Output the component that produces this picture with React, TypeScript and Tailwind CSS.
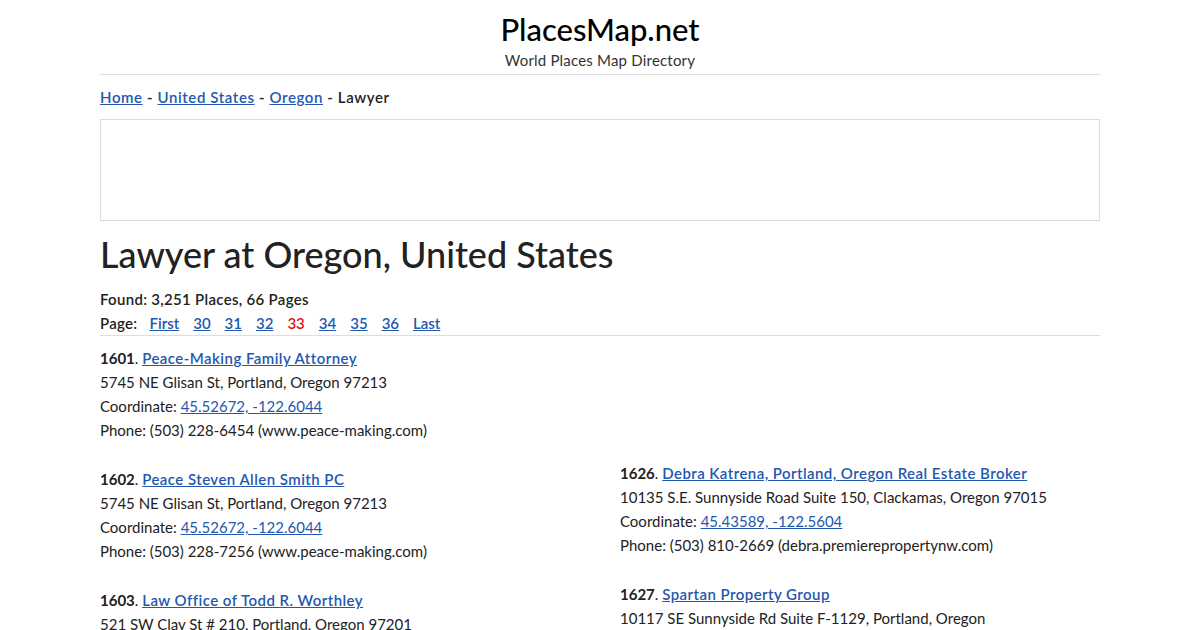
import React from 'react';

type Place = {
  n: number;
  name: string;
  addr: string;
  coord: string;
  phone: string;
};

const LEFT: Place[] = [
  { n: 1601, name: 'Peace-Making Family Attorney', addr: '5745 NE Glisan St, Portland, Oregon 97213', coord: '45.52672, -122.6044', phone: '(503) 228-6454 (www.peace-making.com)' },
  { n: 1602, name: 'Peace Steven Allen Smith PC', addr: '5745 NE Glisan St, Portland, Oregon 97213', coord: '45.52672, -122.6044', phone: '(503) 228-7256 (www.peace-making.com)' },
  { n: 1603, name: 'Law Office of Todd R. Worthley', addr: '521 SW Clay St # 210, Portland, Oregon 97201', coord: '45.51234, -122.6821', phone: '(503) 222-1234' },
];

const RIGHT: Place[] = [
  { n: 1626, name: 'Debra Katrena, Portland, Oregon Real Estate Broker', addr: '10135 S.E. Sunnyside Road Suite 150, Clackamas, Oregon 97015', coord: '45.43589, -122.5604', phone: '(503) 810-2669 (debra.premierepropertynw.com)' },
  { n: 1627, name: 'Spartan Property Group', addr: '10117 SE Sunnyside Rd Suite F-1129, Portland, Oregon', coord: '45.43512, -122.5611', phone: '(503) 555-0100' },
];

const PAGES = ['30', '31', '32', '33', '34', '35', '36'];

const font = { fontFamily: 'Lato, "Open Sans", sans-serif' };

const PlaceItem: React.FC<{ p: Place }> = ({ p }) => (
  <div className="mb-[25px] text-[15px] leading-[24px] text-[#222]">
    <div>
      <span className="font-bold">{p.n}</span>.{' '}
      <a href="#" className="font-semibold tracking-[0.45px] text-[#2358b0] underline">{p.name}</a>
    </div>
    <div>{p.addr}</div>
    <div>
      Coordinate: <a href="#" className="text-[#2358b0] underline">{p.coord}</a>
    </div>
    <div>Phone: {p.phone}</div>
  </div>
);

export default function App() {
  return (
    <div className="min-h-[630px] bg-white text-[#222]" style={font}>
      <div className="mx-auto w-[1000px]">
        <header className="border-b border-[#ddd] pb-[3px] pt-[9px] text-center">
          <h1 className="text-[31px] font-medium leading-[40px] text-black">PlacesMap.net</h1>
          <p className="text-[15px] leading-[22px] tracking-[0.2px] text-[#333]">World Places Map Directory</p>
        </header>

        <nav className="pt-[11px] text-[15px] font-semibold leading-[22px] tracking-[0.6px]">
          <a href="#" className="text-[#2358b0] underline">Home</a>
          {' - '}
          <a href="#" className="text-[#2358b0] underline">United States</a>
          {' - '}
          <a href="#" className="text-[#2358b0] underline">Oregon</a>
          {' - '}
          <span>Lawyer</span>
        </nav>

        <div className="mt-[11px] h-[102px] border border-[#ddd]" />

        <h2 className="mt-[9px] text-[36px] font-medium leading-[48px] text-[#222]">
          Lawyer at Oregon, United States
        </h2>

        <div className="mt-[9px] text-[15px] font-semibold leading-[24px] tracking-[0.3px]">
          Found: 3,251 Places, 66 Pages
        </div>
        <div className="flex items-center gap-[14px] border-b border-[#ddd] text-[15px] font-semibold leading-[24px]">
          <span className="mr-[-2px] tracking-[0.3px]">Page:</span>
          <a href="#" className="text-[#2358b0] underline">First</a>
          {PAGES.map((pg) =>
            pg === '33' ? (
              <span key={pg} className="text-[#e01010]">{pg}</span>
            ) : (
              <a key={pg} href="#" className="text-[#2358b0] underline">{pg}</a>
            )
          )}
          <a href="#" className="text-[#2358b0] underline">Last</a>
        </div>

        <div className="grid grid-cols-2 gap-[40px] pt-[10px]">
          <div>
            {LEFT.map((p) => (
              <PlaceItem key={p.n} p={p} />
            ))}
          </div>
          <div className="pt-[115px]">
            {RIGHT.map((p) => (
              <PlaceItem key={p.n} p={p} />
            ))}
          </div>
        </div>
      </div>
    </div>
  );
}
